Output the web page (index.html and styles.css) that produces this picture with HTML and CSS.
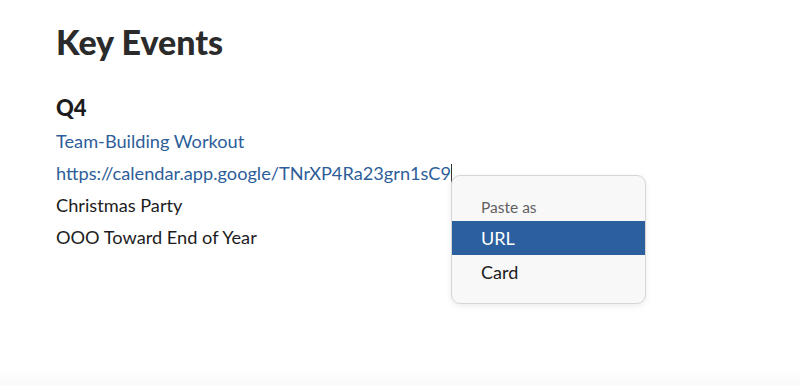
FILE: index.html
```html
<!DOCTYPE html>
<html>
  <head>
    <meta charset="UTF-8" />
    <title>Key Events</title>
    <link rel="stylesheet" href="styles.css">
  </head>
  <body>
    <div class="doc">
      <h1>Key Events</h1>
      <h3>Q4</h3>
      <ul class="events">
        <li><a class="link">Team-Building Workout</a></li>
        <li class="paste-line">
          <a class="link">https://calendar.app.google/TNrXP4Ra23grn1sC9</a><span class="caret"></span>
          <div class="paste-menu">
            <div class="menu-title">Paste as</div>
            <div class="menu-item selected">URL</div>
            <div class="menu-item">Card</div>
          </div>
        </li>
        <li>Christmas Party</li>
        <li>OOO Toward End of Year</li>
      </ul>
    </div>
    <div class="bottom-fade"></div>
  </body>
</html>
```

FILE: styles.css
```css
body {
  margin: 0;
  width: 800px;
  height: 386px;
  overflow: hidden;
  background: #fff;
  font-family: Lato, "Open Sans", sans-serif;
  color: #1d1c1d;
  position: relative;
}
.doc {
  padding: 22px 56px 0;
}
h1 {
  margin: 0;
  font-size: 34px;
  font-weight: 900;
  line-height: 40px;
  color: #2b2b2b;
}
h3 {
  margin: 32px 0 0;
  font-size: 22px;
  font-weight: 900;
  line-height: 28px;
}
.events {
  list-style: none;
  margin: 3px 0 0;
  padding: 0;
  font-size: 18.2px;
}
.events li {
  line-height: 32px;
}
.link {
  color: #2d5e99;
}
.paste-line {
  position: relative;
}
.caret {
  display: inline-block;
  width: 1px;
  height: 21px;
  background: #333;
  vertical-align: -5px;
}
.paste-menu {
  position: absolute;
  left: 395px;
  top: 18px;
  width: 195px;
  height: 129px;
  background: #f8f8f8;
  border: 1px solid #d6d6d6;
  border-radius: 9px;
  box-shadow: 0 2px 6px rgba(0, 0, 0, 0.08);
  padding-top: 17px;
  box-sizing: border-box;
  z-index: 2;
}
.menu-title {
  padding-left: 29px;
  font-size: 15.5px;
  line-height: 28px;
  color: #616061;
}
.menu-item {
  padding-left: 29px;
  font-size: 18px;
  line-height: 34px;
  color: #1d1c1d;
}
.menu-item.selected {
  background: #2c5f9e;
  color: #fff;
}
.bottom-fade {
  position: absolute;
  left: 0;
  right: 0;
  bottom: 0;
  height: 16px;
  background: linear-gradient(#fff, #f9f9f9);
}
```
